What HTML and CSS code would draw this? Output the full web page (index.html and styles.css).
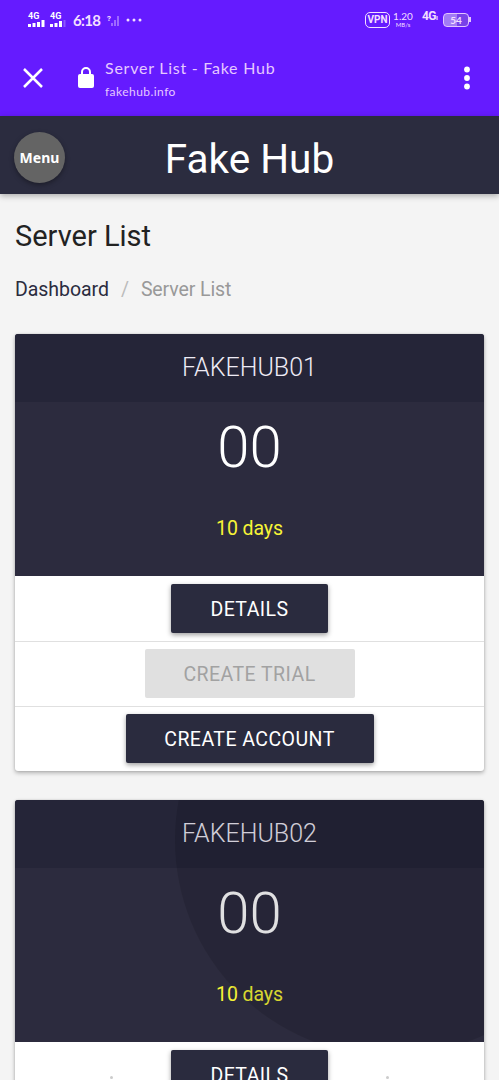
FILE: index.html
```
<!DOCTYPE html>
<html lang="en">
<head>
<meta charset="utf-8">
<title>Server List - Fake Hub</title>
<link rel="stylesheet" href="styles.css">
</head>
<body>
<div class="chrome">
  <div class="status">
    <div class="sim"><span>4G</span><svg width="17" height="7" viewBox="0 0 17 7"><path d="M0 4h3v3H0zM4.500 3h3v4h-3zM9 2h3v5H9zM13.500 0h3v7h-3z"/></svg></div>
    <div class="sim sim-two"><span>4G</span><svg width="17" height="7" viewBox="0 0 17 7"><path d="M0 4h3v3H0zM4.500 3h3v4h-3zM9 1h3v6H9z"/><path opacity=".25" d="M13.500 0h2v7h-2z"/></svg></div>
    <span class="clock">6:18</span>
    <div class="nosim"><span>?</span><svg width="8" height="10" viewBox="0 0 8 10"><path d="M0 7h2v3H0zM3 4h2v6H3zM6 0h2v10H6z"/></svg></div>
    <svg class="more" width="16" height="4" viewBox="0 0 16 4"><circle cx="2" cy="2" r="1.500"/><circle cx="8" cy="2" r="1.500"/><circle cx="14" cy="2" r="1.500"/></svg>
    <span class="vpn">VPN</span>
    <div class="speed"><span>1.20</span><small>MB/s</small></div>
    <span class="net">4G<small>ı</small></span>
    <div class="battery">54</div>
  </div>
  <div class="toolbar">
    <svg class="close" width="20" height="20" viewBox="0 0 20 20"><path d="M1 1l18 18M19 1L1 19"/></svg>
    <svg class="lock" width="16" height="21" viewBox="0 0 16 21"><path class="shackle" d="M4 9V5a4 4 0 0 1 8 0v4"/><rect y="7" width="16" height="14" rx="2"/></svg>
    <div class="page"><span class="page-title">Server List - Fake Hub</span><span class="page-url">fakehub.info</span></div>
    <svg class="kebab" width="6" height="24" viewBox="0 0 6 24"><circle cx="3" cy="3.500" r="2.900"/><circle cx="3" cy="12" r="2.900"/><circle cx="3" cy="20.500" r="2.900"/></svg>
  </div>
</div>
<header class="header">
  <button class="menu">Menu</button>
  <h1>Fake Hub</h1>
</header>
<main>
  <h2>Server List</h2>
  <nav class="crumbs"><a>Dashboard</a><i>/</i><span>Server List</span></nav>
  <section class="card">
    <div class="top">
      <h3>FAKEHUB01</h3>
      <div class="count">00</div>
      <div class="days">10 days</div>
    </div>
    <ul>
      <li><button class="btn details">DETAILS</button></li>
      <li><button class="btn trial" disabled>CREATE TRIAL</button></li>
      <li><button class="btn account">CREATE ACCOUNT</button></li>
    </ul>
  </section>
  <section class="card">
    <div class="top rippled">
      <h3>FAKEHUB02</h3>
      <div class="count">00</div>
      <div class="days">10 days</div>
    </div>
    <ul>
      <li class="dotted"><b></b><button class="btn details">DETAILS</button><b></b></li>
    </ul>
  </section>
</main>
</body>
</html>
```
FILE: styles.css
```
* { box-sizing: border-box; }
html, body { height: 1080px; overflow: hidden; }
body { margin: 0; background: #f4f4f4; font-family: Roboto, sans-serif; color: #222; }
h1, h2, h3, ul { margin: 0; padding: 0; font-weight: 400; }
button { border: 0; padding: 0; font-family: inherit; }
svg { display: block; flex: none; }

.chrome { height: 116px; background: #651bff; color: #f3dfff; fill: #f3dfff; font-family: Lato, sans-serif; }
.status { display: flex; height: 39px; padding-left: 28px; align-items: center; white-space: nowrap; }
.sim { width: 17px; height: 15px; margin-right: 5px; font: 700 9px/8px Roboto, sans-serif; color: #fff; fill: #fff; }
.sim span { display: block; height: 8px; }
.sim-two { margin-right: 6px; }
.clock { width: 28px; font-size: 15px; line-height: 18px; font-weight: 700; letter-spacing: -.7px; }
.nosim { display: flex; width: 12px; height: 12px; margin-left: 6px; align-items: flex-end; font: 700 8px/10px Roboto, sans-serif; }
.nosim span { align-self: flex-start; width: 4px; }
.nosim svg { opacity: .4; }
.more { margin-left: 7px; }
.vpn { width: 25px; height: 16px; margin-left: 223px; border: 1.5px solid #f3dfff; border-radius: 5px; font: 700 10px/14px Roboto, sans-serif; text-align: center; }
.speed { width: 20px; margin-left: 3px; text-align: center; font-size: 10px; line-height: 10px; }
.speed span, .speed small { display: block; }
.speed small { font-size: 6px; line-height: 8px; }
.net { width: 18px; margin: -6px 0 0 9px; font: 700 12px/14px Roboto, sans-serif; letter-spacing: -.6px; }
.net small { font-size: 7px; }
.battery { position: relative; width: 26px; height: 14px; margin-left: 3px; border: 1.5px solid #e3c4ff; border-radius: 4px; background: linear-gradient(90deg, #a27bf5 54%, #7841e8 54%); font-size: 10px; line-height: 12px; font-weight: 700; text-align: center; }
.battery::after { content: ""; position: absolute; right: -3px; top: 3px; width: 2px; height: 5px; background: #e3c4ff; }

.toolbar { display: flex; height: 77px; padding-left: 23px; align-items: center; }
.close { fill: none; stroke: #fff; stroke-width: 2.5; }
.lock { margin-left: 35px; fill: #fff; }
.shackle { fill: none; stroke: #fff; stroke-width: 2; }
.page { width: 358px; margin-left: 11px; padding-top: 3px; display: flex; flex-direction: column; color: #e5c9ff; white-space: nowrap; }
.page-title { font-size: 16px; line-height: 25px; letter-spacing: .75px; }
.page-url { font-size: 12px; line-height: 24px; letter-spacing: .45px; }
.kebab { margin-left: 1px; fill: #fff; }

.header { position: relative; display: grid; grid-template-columns: 51px 1fr 51px; align-items: center; height: 78px; padding: 0 14px; background: #2b2c3f; box-shadow: 0 2px 6px rgba(0,0,0,.3); }
.menu { width: 51px; height: 51px; margin-top: 4px; border-radius: 50%; background: #646464; color: #fff; font: 700 14px "Noto Sans", sans-serif; box-shadow: 0 2px 5px rgba(0,0,0,.35); }
.header h1 { color: #fff; font-size: 40.500px; line-height: 48px; padding-top: 7px; text-align: center; }

main { padding: 0 15px; }
h2 { padding-top: 24px; font-size: 29px; line-height: 36px; }
.crumbs { display: flex; height: 26px; margin: 22px 0 32px; font-size: 19.500px; line-height: 28px; letter-spacing: -.05px; color: #999; }
.crumbs a { color: #2b2c3f; }
.crumbs i { width: 32px; text-align: center; font-style: normal; color: #bbb; }
.crumbs span { letter-spacing: -.1px; }

.card { height: 437px; margin-bottom: 29px; border-radius: 3px; overflow: hidden; background: #fff; box-shadow: 0 2px 4px rgba(0,0,0,.28), 0 0 2px rgba(0,0,0,.15); }
.top { position: relative; overflow: hidden; height: 242px; background: #2c2b3e; color: #fff; text-align: center; }
.top h3 { height: 68px; background: #252538; color: #eeebf5; font-size: 25px; line-height: 67px; font-weight: 300; }
.count { padding-top: 9px; font-size: 58px; line-height: 72px; font-weight: 300; }
.days { padding-top: 33px; font-size: 19.500px; line-height: 26px; letter-spacing: -.1px; color: #f6f436; }
.rippled::after { content: ""; position: absolute; left: 160px; top: -176px; width: 432px; height: 432px; border-radius: 50%; background: rgba(0,0,10,.12); }
ul { list-style: none; }
li { display: flex; justify-content: center; height: 65px; padding-top: 7px; border-top: 1px solid #e0e0e0; }
li:first-child { padding-top: 8px; border-top: 0; }
.btn { height: 49px; padding-top: 1px; border-radius: 2px; background: #2a2b3e; color: #fff; font-size: 19.500px; line-height: 50px; letter-spacing: .45px; box-shadow: 0 2px 5px rgba(0,0,0,.38); }
.details { width: 157px; }
.trial { width: 210px; background: #e0e0e0; color: #a2a2a2; box-shadow: none; }
.account { width: 248px; }
.dotted b { width: 3px; height: 3px; margin: 26px 58px 0; border-radius: 50%; background: #ccc; }
```
